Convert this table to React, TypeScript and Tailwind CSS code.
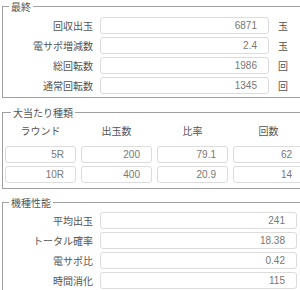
import React from "react";

const jp = { fontFamily: '"Noto Sans CJK JP", "Noto Sans", sans-serif' };

const finalRows = [
  { label: "回収出玉", value: "6871", unit: "玉" },
  { label: "電サポ増減数", value: "2.4", unit: "玉" },
  { label: "総回転数", value: "1986", unit: "回" },
  { label: "通常回転数", value: "1345", unit: "回" },
];

const hitRows = [
  ["5R", "200", "79.1", "62"],
  ["10R", "400", "20.9", "14"],
];

const specRows = [
  { label: "平均出玉", value: "241" },
  { label: "トータル確率", value: "18.38" },
  { label: "電サポ比", value: "0.42" },
  { label: "時間消化", value: "115" },
];

function Box({ value }: { value: string }) {
  return (
    <div className="h-[17px] border border-[#dcdcdc] rounded-[3px] bg-white flex items-center justify-end pr-[11px] text-[10px] text-[#777] font-['Liberation_Sans',Arial,sans-serif] leading-none">
      {value}
    </div>
  );
}

function Section({ title, children, className }: { title: string; children: React.ReactNode; className?: string }) {
  return (
    <fieldset className={"border border-[#a0a0a0] ml-[2px] w-[310px] " + (className ?? "")}>
      <legend className="ml-[6px] px-[2px] text-[10px] leading-[11px] text-[#555]" style={jp}>
        {title}
      </legend>
      {children}
    </fieldset>
  );
}

export default function App() {
  return (
    <main className="w-[300px] h-[290px] overflow-hidden bg-white pt-[1px]">
      <Section title="最終" className="pb-[3px]">
        <div className="grid grid-cols-[90px_169px_20px] gap-x-[7px] gap-y-[3px] mt-[5px]">
          {finalRows.map((r) => (
            <React.Fragment key={r.label}>
              <div className="text-right text-[10px] text-[#555] leading-[17px]" style={jp}>
                {r.label}
              </div>
              <Box value={r.value} />
              <div className="pl-[2px] text-[10px] text-[#555] leading-[17px]" style={jp}>
                {r.unit}
              </div>
            </React.Fragment>
          ))}
        </div>
      </Section>

      <Section title="大当たり種類" className="mt-[9px] pb-[5px] pl-[2px]">
        <div className="grid grid-cols-[71px_71px_71px_71px] gap-x-[5px] gap-y-[3px]">
          {["ラウンド", "出玉数", "比率", "回数"].map((h) => (
            <div key={h} className="text-center text-[10px] text-[#555] leading-[14px] mt-[6px] mb-[5px]" style={jp}>
              {h}
            </div>
          ))}
          {hitRows.map((row) =>
            row.map((v, i) => <Box key={row[0] + i} value={v} />)
          )}
        </div>
      </Section>

      <Section title="機種性能" className="mt-[8px] pb-[3px]">
        <div className="grid grid-cols-[90px_197px] gap-x-[7px] gap-y-[3px] mt-[4px]">
          {specRows.map((r) => (
            <React.Fragment key={r.label}>
              <div className="text-right text-[10px] text-[#555] leading-[17px]" style={jp}>
                {r.label}
              </div>
              <Box value={r.value} />
            </React.Fragment>
          ))}
        </div>
      </Section>
    </main>
  );
}
